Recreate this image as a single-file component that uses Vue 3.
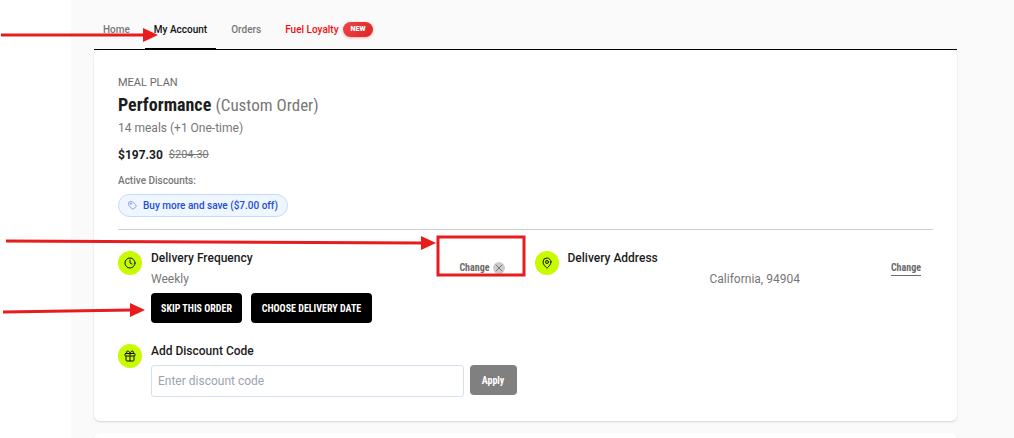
<script setup>
import { ref } from 'vue'

const tabs = [
  { label: 'Home' },
  { label: 'My Account', active: true },
  { label: 'Orders' },
  { label: 'Fuel Loyalty', accent: true, badge: 'NEW' },
]
const code = ref('')
</script>

<template>
  <div class="page">
    <main class="content">
      <nav class="tabs">
        <a v-for="tab in tabs" :key="tab.label" href="#" class="tab" :class="{ active: tab.active, accent: tab.accent }">
          {{ tab.label }}
          <span v-if="tab.badge" class="badge">{{ tab.badge }}</span>
        </a>
      </nav>

      <section class="card">
        <p class="eyebrow">MEAL PLAN</p>
        <h1 class="title">Performance <span class="muted">(Custom Order)</span></h1>
        <p class="meals">14 meals (+1 One-time)</p>
        <p class="price"><strong>$197.30</strong><s>$204.30</s></p>
        <p class="label">Active Discounts:</p>
        <span class="pill">
          <svg class="tag" viewBox="0 0 24 24" aria-hidden="true">
            <path d="M12.6 2.6A2 2 0 0 0 11.2 2H4a2 2 0 0 0-2 2v7.2a2 2 0 0 0 .6 1.4l8.7 8.7a2.4 2.4 0 0 0 3.4 0l6.6-6.6a2.4 2.4 0 0 0 0-3.4z" />
            <circle cx="7.5" cy="7.5" r="1" />
          </svg>
          Buy more and save ($7.00 off)
        </span>

        <div class="details">
          <div class="item">
            <span class="icon">
              <svg viewBox="0 0 24 24" aria-hidden="true"><circle cx="12" cy="12" r="10" /><path d="M12 6v6l4 2" /></svg>
            </span>
            <div class="body">
              <h2>Delivery Frequency</h2>
              <p class="value">Weekly</p>
              <div class="actions">
                <button type="button" class="btn">SKIP THIS ORDER</button>
                <button type="button" class="btn wide">CHOOSE DELIVERY DATE</button>
              </div>
            </div>
            <div class="change">
              <a href="#">Change</a>
              <button type="button" class="clear" aria-label="Clear">
                <svg viewBox="0 0 12 12" aria-hidden="true"><path d="M3 3l6 6M9 3l-6 6" /></svg>
              </button>
            </div>
          </div>

          <div class="item">
            <span class="icon">
              <svg viewBox="0 0 24 24" aria-hidden="true"><path d="M20 10c0 5-5.5 10.2-7.4 11.8a1 1 0 0 1-1.2 0C9.5 20.2 4 15 4 10a8 8 0 0 1 16 0z" /><circle cx="12" cy="10" r="3" /></svg>
            </span>
            <div class="body">
              <h2>Delivery Address</h2>
              <p class="value address">California, 94904</p>
            </div>
            <div class="change"><a href="#" class="underlined">Change</a></div>
          </div>

          <div class="item">
            <span class="icon">
              <svg viewBox="0 0 24 24" aria-hidden="true"><rect x="2" y="7" width="20" height="5" rx="1" /><path d="M12 7v15M4 12v8a2 2 0 0 0 2 2h12a2 2 0 0 0 2-2v-8M7.5 7a2.5 2.5 0 0 1 0-5C11 2 12 7 12 7s1-5 4.5-5a2.5 2.5 0 0 1 0 5" /></svg>
            </span>
            <form class="body" @submit.prevent>
              <h2><label for="discount">Add Discount Code</label></h2>
              <div class="code">
                <input id="discount" v-model="code" type="text" placeholder="Enter discount code" />
                <button type="submit" class="apply">Apply</button>
              </div>
            </form>
          </div>
        </div>
      </section>

      <section class="card next"></section>
    </main>

    <svg class="notes" width="530" height="330" viewBox="0 0 530 330" aria-hidden="true">
      <g class="lines">
        <path d="M1 35H145" />
        <path d="M6 241L423 243" />
        <path d="M3 312L132 310" />
        <rect x="438" y="237" width="86" height="38" />
      </g>
      <path d="M143 28v14l15-7zM421 236v14l15-7zM130 303v14l15-7z" />
    </svg>
  </div>
</template>

<style>
body {
  margin: 0;
  background: #fff;
}
</style>

<style scoped>
.page {
  position: relative;
  height: 100vh;
  overflow: hidden;
  box-sizing: border-box;
  padding-left: 71px;
  font-family: Roboto, "Liberation Sans", sans-serif;
  color: #1c1c1c;
}
.content {
  min-height: 100%;
  box-sizing: border-box;
  padding: 0 57px 0 23px;
  background: #fafafa;
}
p, h1, h2 {
  margin: 0;
}
a {
  color: inherit;
  text-decoration: none;
}
button, input {
  font: inherit;
  border: 0;
  padding: 0;
  box-sizing: border-box;
}
svg {
  fill: none;
  stroke: currentColor;
  stroke-width: 2;
  stroke-linecap: round;
  stroke-linejoin: round;
}
.tabs {
  display: flex;
  height: 49px;
  border-bottom: 1px solid #000;
}
.tab {
  display: flex;
  align-items: center;
  gap: 4px;
  box-sizing: border-box;
  padding: 10px 9px 0;
  border-bottom: 1px solid transparent;
  font-size: 10px;
  font-weight: 500;
  color: #777;
}
.tab + .tab {
  margin-left: 6px;
}
.tab.active {
  color: #111;
  border-color: #000;
}
.tab.accent {
  color: #f20d0d;
}
.badge {
  padding: 0 8px;
  border-radius: 8px;
  background: linear-gradient(135deg, #ef4444, #dc2626);
  box-shadow: 0 1px 3px rgba(239, 68, 68, 0.4);
  color: #fff;
  font-size: 7px;
  font-weight: 900;
  line-height: 15px;
}
.card {
  padding: 24px;
  border-radius: 6px;
  background: #fff;
  box-shadow: 0 1px 2px rgba(0, 0, 0, 0.16);
}
.next {
  margin-top: 12px;
}
.eyebrow {
  font-size: 11px;
  font-weight: 400;
  line-height: 18px;
  color: #6b6b6b;
}
.title {
  font-family: "Roboto Condensed", "Liberation Sans Narrow", Roboto, sans-serif;
  font-size: 18px;
  font-weight: 700;
  line-height: 26px;
}
.muted {
  font-size: 17px;
  font-weight: 400;
  color: #777;
}
.meals {
  font-size: 12px;
  line-height: 20px;
  color: #777;
}
.price {
  display: flex;
  gap: 6px;
  margin-top: 6px;
  font-size: 12px;
  line-height: 22px;
}
.price s {
  font-size: 11px;
  color: #777;
}
.label {
  margin: 6px 0 4px;
  font-size: 10px;
  font-weight: 500;
  line-height: 18px;
  color: #777;
}
.pill {
  display: flex;
  align-items: center;
  gap: 6px;
  width: fit-content;
  padding: 0 9px;
  border: 1px solid #bfdbfe;
  border-radius: 12px;
  background: #eff6ff;
  color: #1d4ed8;
  font-size: 10px;
  font-weight: 500;
  line-height: 21px;
}
.tag {
  width: 9px;
  height: 9px;
  color: #5b7fe5;
}
.details {
  display: grid;
  grid-template-columns: 1fr 1fr;
  gap: 20px 18px;
  margin-top: 12px;
  padding-top: 20px;
  border-top: 1px solid #d1d1d1;
}
.item {
  display: flex;
  align-items: flex-start;
}
.icon {
  display: flex;
  align-items: center;
  justify-content: center;
  width: 24px;
  height: 24px;
  margin: 1px 9px 0 0;
  border-radius: 50%;
  background: #c8fa00;
  color: #111;
}
.icon svg {
  width: 12px;
  height: 12px;
}
.body {
  flex: 1;
}
h2 {
  font-size: 12px;
  font-weight: 500;
  line-height: 16px;
}
.value {
  margin-top: 3px;
  font-size: 12px;
  line-height: 20px;
  color: #777;
}
.address {
  padding-left: 142px;
}
.actions {
  display: flex;
  gap: 9px;
  margin-top: 4px;
}
.btn, .apply, .change {
  font-family: "Roboto Condensed", "Liberation Sans Narrow", Roboto, sans-serif;
  font-weight: 700;
  font-size: 10px;
}
.btn {
  width: 91px;
  height: 30px;
  border-radius: 4px;
  background: #000;
  color: #fff;
  white-space: nowrap;
}
.btn.wide {
  width: 121px;
}
.change {
  display: flex;
  align-items: center;
  gap: 3px;
  margin: 11px 12px 0 0;
  line-height: 14px;
  color: #6b6b6b;
}
.underlined {
  border-bottom: 1px solid #6b6b6b;
}
.clear {
  display: flex;
  width: 12px;
  height: 12px;
  border-radius: 50%;
  background: #ccc;
  color: #777;
}
.clear svg {
  width: 12px;
  height: 12px;
  stroke-width: 1;
}
.code {
  display: flex;
  gap: 6px;
  margin-top: 6px;
}
.code input {
  flex: 1;
  min-width: 0;
  height: 32px;
  padding: 0 6px;
  border: 1px solid #d5dff0;
  border-radius: 3px;
  background: #fff;
  font-size: 12px;
}
.code input::placeholder {
  color: #9ca3af;
}
.apply {
  width: 47px;
  height: 30px;
  border-radius: 4px;
  background: #808080;
  color: #fff;
}
.notes {
  position: absolute;
  top: 0;
  left: 0;
  pointer-events: none;
  fill: #e81c1c;
  stroke: none;
}
.lines {
  fill: none;
  stroke: #e81c1c;
  stroke-width: 3;
  stroke-linecap: butt;
  stroke-linejoin: miter;
}
</style>
